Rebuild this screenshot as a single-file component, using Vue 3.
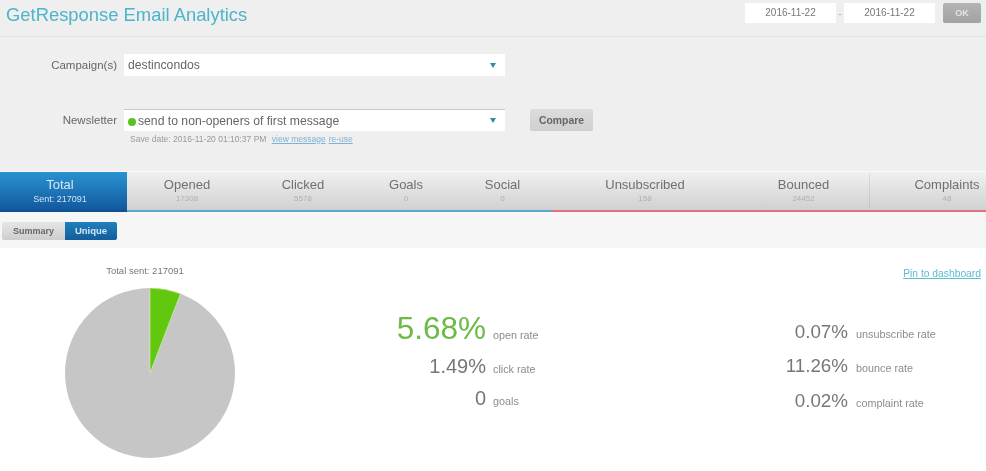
<script setup>
const tabs = [
  { name: 'Total', sub: 'Sent: 217091', kind: 'active' },
  { name: 'Opened', sub: '17308', kind: 'good' },
  { name: 'Clicked', sub: '5578', kind: 'good' },
  { name: 'Goals', sub: '0', kind: 'good' },
  { name: 'Social', sub: '0', kind: 'good' },
  { name: 'Unsubscribed', sub: '158', kind: 'bad' },
  { name: 'Bounced', sub: '24452', kind: 'bad' },
  { name: 'Complaints', sub: '48', kind: 'bad' }
]
const leftStats = [
  { value: '5.68%', label: 'open rate', big: true },
  { value: '1.49%', label: 'click rate' },
  { value: '0', label: 'goals' }
]
const rightStats = [
  { value: '0.07%', label: 'unsubscribe rate' },
  { value: '11.26%', label: 'bounce rate' },
  { value: '0.02%', label: 'complaint rate' }
]
</script>

<template>
  <div class="page">
    <header class="top">
      <h1 class="title">GetResponse Email Analytics</h1>
      <div class="dates">
        <div class="date">2016-11-22</div>
        <span class="dash">-</span>
        <div class="date">2016-11-22</div>
        <button class="ok">OK</button>
      </div>
    </header>

    <section class="filters">
      <div class="row">
        <label class="lbl">Campaign(s)</label>
        <div class="select">
          <span>destincondos</span>
          <i class="caret"></i>
        </div>
      </div>
      <div class="row second">
        <label class="lbl">Newsletter</label>
        <div class="select inset">
          <span><b class="dot"></b>send to non-openers of first message</span>
          <i class="caret"></i>
        </div>
        <button class="compare">Compare</button>
      </div>
      <div class="save">
        Save date: 2016-11-20 01:10:37 PM
        <a>view message</a>
        <a>re-use</a>
      </div>
    </section>

    <nav class="tabs">
      <div v-for="t in tabs" :key="t.name" class="tab" :class="t.kind">
        <div class="tab-name">{{ t.name }}</div>
        <div class="tab-sub">{{ t.sub }}</div>
      </div>
    </nav>

    <div class="modes">
      <div class="toggle">
        <span class="mode">Summary</span>
        <span class="mode on">Unique</span>
      </div>
    </div>

    <section class="result">
      <div class="chart">
        <div class="chart-title">Total sent: 217091</div>
        <svg class="pie" width="172" height="172" viewBox="-86 -86 172 172">
          <circle r="85" fill="#c6c6c6" />
          <path d="M0 0 L0 -85 A85 85 0 0 1 30.5 -79.3 Z" fill="#62c80f" stroke="#dff5c0" stroke-width="0.6" />
        </svg>
      </div>
      <div class="numbers">
        <a class="pin">Pin to dashboard</a>
        <div class="stats">
          <div class="stat-grid left">
            <template v-for="s in leftStats" :key="s.label">
              <span class="val" :class="{ big: s.big }">{{ s.value }}</span>
              <span class="cap">{{ s.label }}</span>
            </template>
          </div>
          <div class="stat-grid right">
            <template v-for="s in rightStats" :key="s.label">
              <span class="val">{{ s.value }}</span>
              <span class="cap">{{ s.label }}</span>
            </template>
          </div>
        </div>
      </div>
    </section>
  </div>
</template>

<style scoped>
.page {
  width: 986px;
  height: 471px;
  overflow: hidden;
  background: #fff;
  font-family: "Liberation Sans", Arial, sans-serif;
  color: #555;
  filter: blur(0.5px);
}
.top {
  height: 37px;
  background: #efefef;
  border-bottom: 1px solid #e2e2e2;
  box-sizing: border-box;
  display: flex;
  justify-content: space-between;
  padding: 3px 5px 0 6px;
}
.title {
  margin: 0;
  font-size: 18.4px;
  line-height: 24px;
  font-weight: 400;
  color: #4db4cc;
}
.dates {
  display: flex;
  align-items: flex-start;
}
.date {
  width: 91px;
  height: 20px;
  line-height: 20px;
  background: #fff;
  text-align: center;
  font-size: 10px;
  color: #777;
}
.dash {
  width: 8px;
  text-align: center;
  font-size: 10px;
  line-height: 22px;
  color: #aaa;
}
.ok {
  width: 38px;
  height: 20px;
  margin-left: 8px;
  padding: 0;
  border: none;
  border-radius: 2px;
  background: linear-gradient(#b4b4b4, #a2a2a2);
  color: #e4e4e4;
  font: 700 9px "Liberation Sans", Arial, sans-serif;
}
.filters {
  height: 134px;
  background: #efefef;
  box-sizing: border-box;
  padding-top: 17px;
}
.row {
  display: flex;
  align-items: center;
  height: 22px;
}
.row.second {
  margin-top: 33px;
}
.lbl {
  width: 117px;
  text-align: right;
  font-size: 11.5px;
  color: #666;
  margin-right: 7px;
}
.select {
  width: 381px;
  height: 22px;
  box-sizing: border-box;
  background: #fff;
  display: flex;
  align-items: center;
  justify-content: space-between;
  padding: 0 9px 0 4px;
  font-size: 12.2px;
  color: #666;
}
.select.inset {
  border-top: 1px solid #c9c9c9;
}
.caret {
  width: 0;
  height: 0;
  border-left: 3px solid transparent;
  border-right: 3px solid transparent;
  border-top: 5px solid #2f8fa8;
}
.dot {
  display: inline-block;
  width: 8px;
  height: 8px;
  border-radius: 50%;
  background: #5cc021;
  margin-right: 2px;
  vertical-align: -1px;
}
.compare {
  margin-left: 25px;
  width: 63px;
  height: 22px;
  padding: 0;
  border: none;
  border-radius: 2px;
  background: linear-gradient(#dcdcdc, #cfcfcf);
  color: #666;
  font: 700 10.4px "Liberation Sans", Arial, sans-serif;
}
.save {
  margin: 3px 0 0 130px;
  font-size: 8.5px;
  line-height: 11px;
  color: #999;
}
.save a {
  color: #7fb0d6;
  text-decoration: underline;
  margin-left: 3px;
}
.tabs {
  display: grid;
  grid-template-columns: 127px 120px 112px 94px 99px 186px 131px 156px;
  height: 41px;
  background: linear-gradient(#f0f0f0, #cfcfcf);
  border-top: 1px solid #f9f9f9;
  box-sizing: border-box;
}
.tab {
  position: relative;
  box-sizing: border-box;
  text-align: center;
  padding-top: 5px;
  border-bottom: 2px solid #5aa9c9;
}
.tab:last-child::before {
  content: "";
  position: absolute;
  left: 0;
  top: 2px;
  bottom: 2px;
  width: 1px;
  background: rgba(0, 0, 0, 0.08);
}
.tab.bad {
  border-bottom-color: #e2707f;
}
.tab.active {
  padding-right: 7px;
  background: linear-gradient(#2a93cf, #12589f);
  border-bottom-color: #12508f;
  color: #fff;
}
.tab-name {
  font-size: 13px;
  line-height: 15px;
  color: #707070;
}
.tab-sub {
  font-size: 8px;
  line-height: 12px;
  padding-top: 1px;
  color: #b0b0b0;
}
.active .tab-name {
  color: #d4e9f6;
}
.active .tab-sub {
  font-size: 9px;
  color: #cfe3f2;
}
.modes {
  height: 36px;
  background: #f6f6f6;
  box-sizing: border-box;
  padding: 8px 0 0 2px;
}
.toggle {
  display: inline-flex;
  height: 18px;
}
.mode {
  width: 63px;
  line-height: 18px;
  text-align: center;
  font-size: 9px;
  font-weight: 700;
  color: #666;
  background: linear-gradient(#e6e6e6, #cdcdcd);
  border-radius: 2px 0 0 2px;
}
.mode.on {
  width: 52px;
  font-size: 9.5px;
  color: #cfe6f5;
  background: linear-gradient(#1f80bd, #135d9b);
  border-radius: 0 2px 2px 0;
}
.result {
  display: grid;
  grid-template-columns: 300px 1fr;
}
.chart {
  padding-top: 17px;
}
.chart-title {
  width: 290px;
  text-align: center;
  font-size: 9.5px;
  line-height: 11px;
  color: #777;
}
.pie {
  display: block;
  margin: 11px 0 0 64px;
}
.numbers {
  padding-top: 19px;
}
.pin {
  display: block;
  text-align: right;
  padding-right: 5px;
  font-size: 10.3px;
  line-height: 14px;
  color: #5cbcd0;
  text-decoration: underline;
}
.stats {
  display: flex;
  margin-top: 30px;
}
.stat-grid {
  display: grid;
  align-items: baseline;
  column-gap: 7px;
}
.stat-grid.left {
  width: 360px;
  grid-template-columns: 186px 1fr;
  grid-template-rows: 38px 32px 34px;
}
.stat-grid.right {
  grid-template-columns: 188px 1fr;
  grid-template-rows: 34px 35px 34px;
  column-gap: 8px;
  margin-top: 4px;
}
.val {
  text-align: right;
  font-size: 20px;
  line-height: 34px;
  color: #777;
}
.val.big {
  font-size: 31.5px;
  color: #6cbb44;
}
.right .val {
  font-size: 18.8px;
}
.cap {
  font-size: 10.8px;
  color: #8c8c8c;
}
</style>
